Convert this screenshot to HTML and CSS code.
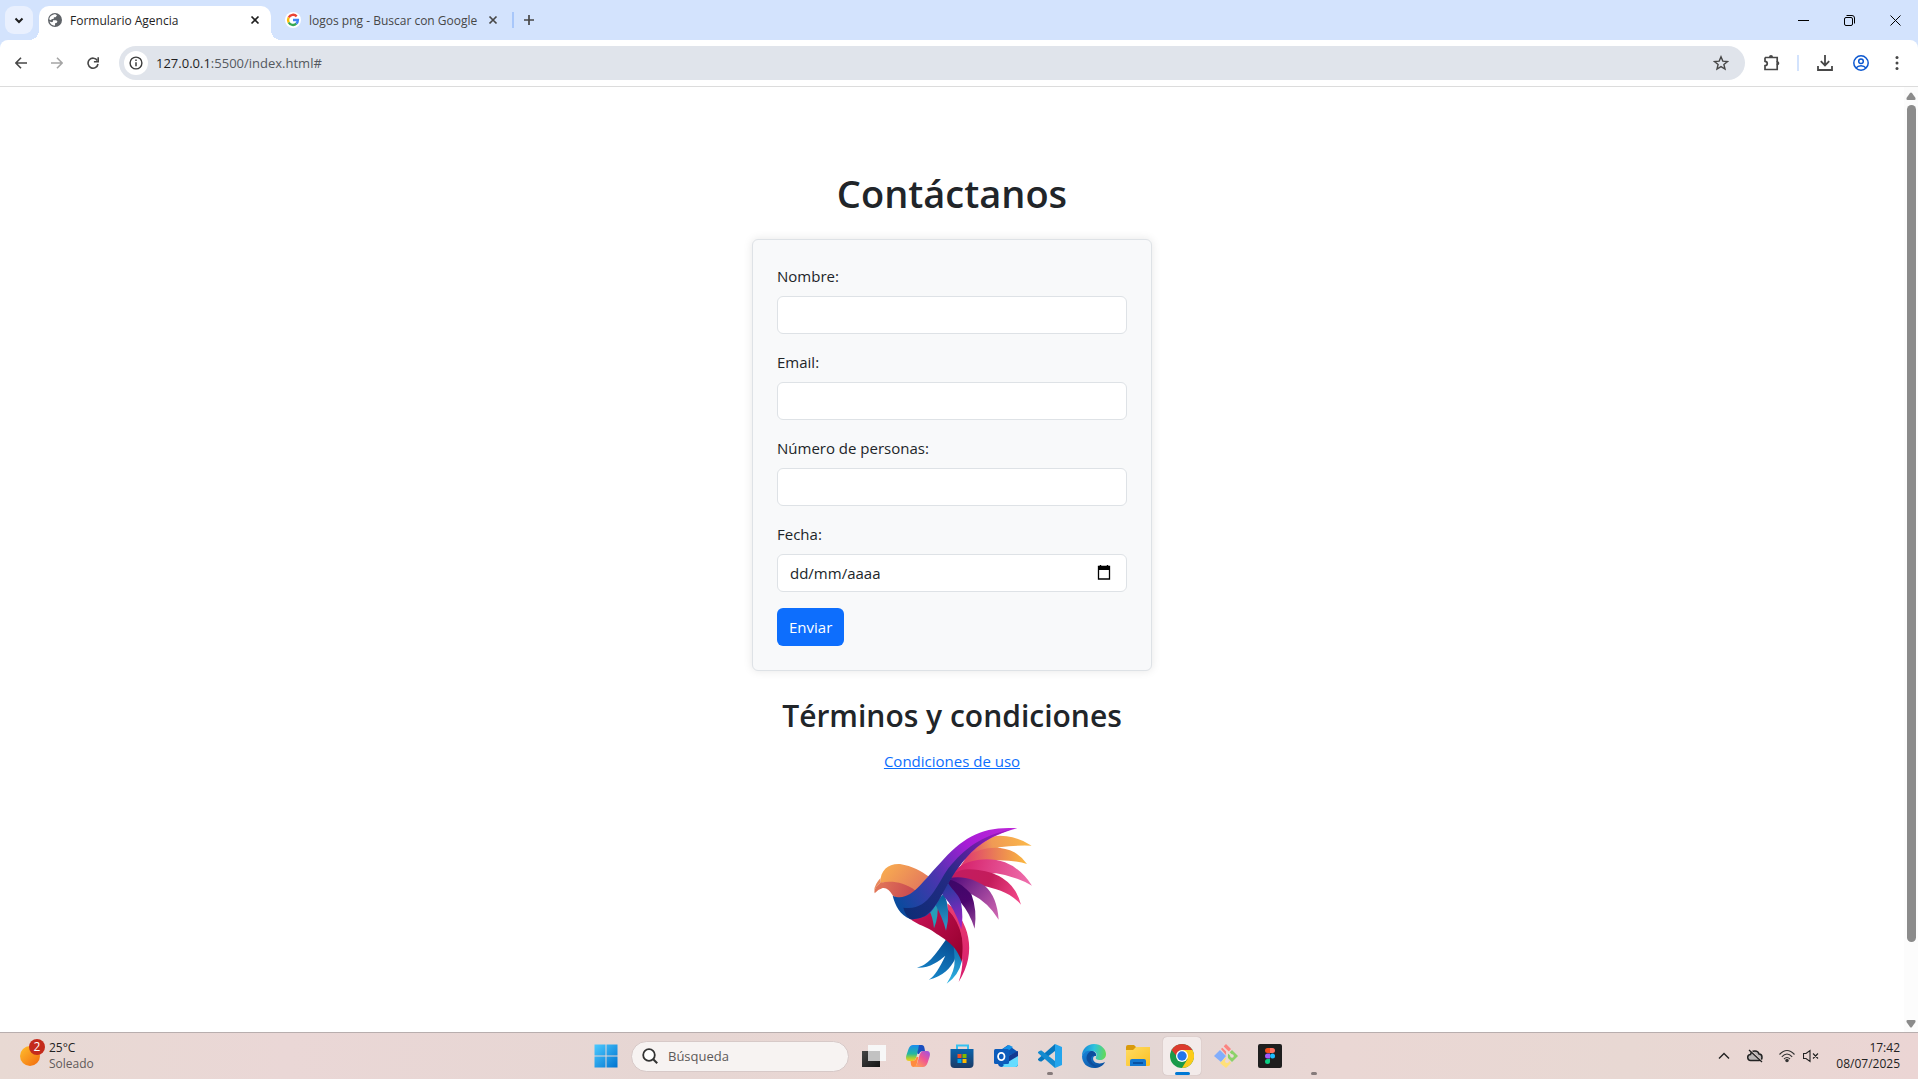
FILE: index.html
```html
<!DOCTYPE html>
<html lang="es">
<head>
<meta charset="utf-8">
<title>Formulario Agencia</title>
<meta name="viewport" content="width=device-width, initial-scale=1">
<link rel="stylesheet" href="styles.css">
</head>
<body>
<header class="browser">
  <div class="tab-strip">
    <button class="tab-search" aria-label="Buscar pestañas"><svg width="12" height="12" viewBox="0 0 12 12"><path d="M2.500 4.500 6 8l3.500-3.500" fill="none" stroke="#1f1f1f" stroke-width="2"/></svg></button>
    <div class="tab tab-active">
      <svg width="14" height="14" viewBox="0 0 14 14"><circle cx="7" cy="7" r="7" fill="#5f6368"/><path d="M7.500 1.200 9 2.600 7.500 4.200H6L5.500 6H3.800L3 7.200 1.300 6.500C1.300 3.500 4 1.200 7.500 1.200zM5 7.200h3.200l1.300 1.300-1 1.500H7.300l-.5 2.700C4.200 12.500 2 10.800 1.500 8.500L4 9.200l1-.6z" fill="#fff"/></svg>
      <span class="tab-title">Formulario Agencia</span>
      <button class="tab-close" aria-label="Cerrar"><svg width="10" height="10" viewBox="0 0 10 10"><path d="m1.500 1.500 7 7m0-7-7 7" stroke="#1f1f1f" stroke-width="1.700"/></svg></button>
    </div>
    <div class="tab tab-google">
      <svg class="google" width="16" height="16" viewBox="0 0 16 16"><circle cx="8" cy="8" r="8" fill="#fff"/><g fill="none" stroke-width="2.400"><path d="M11.700 4.300A5 5 0 0 0 3.700 5.500" stroke="#ea4335"/><path d="M3.700 5.500a5 5 0 0 0 0 5" stroke="#fbbc04"/><path d="M3.700 10.500a5 5 0 0 0 7.600 1.200" stroke="#34a853"/><path d="M11.300 11.700A5 5 0 0 0 12.900 8H8" stroke="#4285f4"/></g></svg>
      <span class="tab-title">logos png - Buscar con Google</span>
      <button class="tab-close" aria-label="Cerrar"><svg width="10" height="10" viewBox="0 0 10 10"><path d="m1.500 1.500 7 7m0-7-7 7" stroke="#474747" stroke-width="1.700"/></svg></button>
    </div>
    <span class="tab-divider"></span>
    <button class="new-tab" aria-label="Nueva pestaña"><svg width="12" height="12" viewBox="0 0 12 12"><path d="M6 1v10M1 6h10" stroke="#474747" stroke-width="1.700"/></svg></button>
    <div class="window-controls">
      <button aria-label="Minimizar"><svg width="11" height="11" viewBox="0 0 11 11"><path d="M0 5.500h11" stroke="#000"/></svg></button>
      <button aria-label="Restaurar"><svg width="11" height="11" viewBox="0 0 11 11"><rect x=".5" y="2.500" width="8" height="8" rx="1.500" fill="none" stroke="#000"/><path d="M2.500.5H8A2.500 2.500 0 0 1 10.500 3v5.500" fill="none" stroke="#000"/></svg></button>
      <button aria-label="Cerrar ventana"><svg width="11" height="11" viewBox="0 0 11 11"><path d="m.5.5 10 10m0-10-10 10" stroke="#000"/></svg></button>
    </div>
  </div>
  <div class="toolbar">
    <button aria-label="Atrás"><svg width="12" height="12" viewBox="0 0 12 12"><path d="M12 6H1.500M6 .8.900 6 6 11.200" fill="none" stroke="#474747" stroke-width="1.600"/></svg></button>
    <button aria-label="Adelante"><svg width="12" height="12" viewBox="0 0 12 12"><path d="M0 6h10.500M6 .8 11.100 6 6 11.200" fill="none" stroke="#a5a5a5" stroke-width="1.600"/></svg></button>
    <button aria-label="Recargar"><svg width="12" height="12" viewBox="0 0 12 12"><path d="M10.300 3.500A5 5 0 1 0 11 7" fill="none" stroke="#474747" stroke-width="1.600"/><path d="M11.200.3v4.400H6.900" fill="none" stroke="#474747" stroke-width="1.600"/></svg></button>
    <div class="address">
      <span class="site-info"><svg width="14" height="14" viewBox="0 0 14 14"><circle cx="7" cy="7" r="5.900" fill="none" stroke="#3c3c3c" stroke-width="1.400"/><path d="M7 6.300v4M7 3.500v1.600" stroke="#3c3c3c" stroke-width="1.500"/></svg></span>
      <p class="url"><b>127.0.0.1</b>:5500/index.html#</p>
      <button aria-label="Marcador"><svg width="16" height="16" viewBox="0 0 16 16"><path d="m8 1.800 1.800 4.300 4.700.4-3.600 3 1.100 4.600L8 11.600l-4 2.500 1.100-4.600-3.600-3 4.700-.4z" fill="none" stroke="#474747" stroke-width="1.400"/></svg></button>
    </div>
    <div class="toolbar-actions">
      <button aria-label="Extensiones"><svg width="18" height="18" viewBox="0 0 18 18"><path d="M2 3.500h12.200v4.300M14.200 10.500v5H2v-3.800c3-.2 3-4.200 0-4.400V3.500" fill="none" stroke="#474747" stroke-width="1.700"/><path d="M6 3a2 2 0 0 1 4 0zm8.300 4.200a2 2 0 0 1 0 4z" fill="#474747"/><path d="M14.200 7v4" stroke="#474747" stroke-width="1.700"/></svg></button>
      <span class="tool-divider"></span>
      <button aria-label="Descargas"><svg width="16" height="16" viewBox="0 0 16 16"><path d="M8 0v10M3.800 6.200 8 10.400l4.200-4.200M1 11v4h14v-4" fill="none" stroke="#474747" stroke-width="1.800"/></svg></button>
      <button aria-label="Perfil"><svg width="16" height="16" viewBox="0 0 16 16" fill="none" stroke="#0b57d0" stroke-width="1.500"><circle cx="8" cy="8" r="7.200"/><circle cx="8" cy="6.300" r="2.300"/><path d="M3 13c2.500-3 7.500-3 10 0"/></svg></button>
      <button aria-label="Menú"><svg width="16" height="16" viewBox="0 0 16 16" fill="#474747"><circle cx="8" cy="2.500" r="1.500"/><circle cx="8" cy="8" r="1.500"/><circle cx="8" cy="13.500" r="1.500"/></svg></button>
    </div>
  </div>
</header>
<div class="viewport">
  <main class="page">
    <h1>Contáctanos</h1>
    <form class="card">
      <div class="field"><label for="nombre">Nombre:</label><input id="nombre" type="text"></div>
      <div class="field"><label for="email">Email:</label><input id="email" type="email"></div>
      <div class="field"><label for="personas">Número de personas:</label><input id="personas" type="text" inputmode="numeric"></div>
      <div class="field"><label for="fecha">Fecha:</label>
        <div class="date"><input id="fecha" type="text" placeholder="dd/mm/aaaa"><button type="button" aria-label="Abrir calendario"><svg width="14" height="15" viewBox="0 0 14 15"><path d="M3.500 0v2M10.500 0v2" stroke="#000" stroke-width="1.400"/><path d="M1.500 1.500h11V14h-11z" fill="none" stroke="#000" stroke-width="1.300"/><path d="M1 1.500h12V5H1z"/></svg></button></div>
      </div>
      <button class="submit" type="submit">Enviar</button>
    </form>
    <h2>Términos y condiciones</h2>
    <a class="terms" href="#">Condiciones de uso</a>
    <svg class="logo" viewBox="6 -3 600 570" role="img" aria-label="Logo">
      <defs>
        <linearGradient id="wing" x1="130" y1="280" x2="500" y2="55" gradientUnits="userSpaceOnUse"><stop offset="0" stop-color="#064c9c"/><stop offset=".35" stop-color="#4a35ae"/><stop offset=".65" stop-color="#a81cd6"/><stop offset="1" stop-color="#be28d8"/></linearGradient>
        <linearGradient id="under" x1="150" y1="310" x2="440" y2="70" gradientUnits="userSpaceOnUse"><stop offset="0" stop-color="#0c2d75"/><stop offset=".5" stop-color="#252a84"/><stop offset="1" stop-color="#9419b8"/></linearGradient>
        <linearGradient id="head" x1="110" y1="160" x2="200" y2="240" gradientUnits="userSpaceOnUse"><stop offset="0" stop-color="#f8ac50"/><stop offset="1" stop-color="#e57c5c"/></linearGradient>
        <linearGradient id="cheek" x1="80" y1="220" x2="190" y2="260" gradientUnits="userSpaceOnUse"><stop offset="0" stop-color="#e27758"/><stop offset="1" stop-color="#c94850"/></linearGradient>
        <linearGradient id="f1" x1="350" y1="140" x2="530" y2="90" gradientUnits="userSpaceOnUse"><stop offset="0" stop-color="#dc3d70"/><stop offset=".45" stop-color="#f09a55"/><stop offset="1" stop-color="#fab64a"/></linearGradient>
        <linearGradient id="f2" x1="350" y1="150" x2="530" y2="150" gradientUnits="userSpaceOnUse"><stop offset="0" stop-color="#e0406e"/><stop offset=".5" stop-color="#ea8055"/><stop offset="1" stop-color="#fbb93f"/></linearGradient>
        <linearGradient id="f3" x1="320" y1="170" x2="545" y2="220" gradientUnits="userSpaceOnUse"><stop offset="0" stop-color="#d41e68"/><stop offset="1" stop-color="#ef70ae"/></linearGradient>
        <linearGradient id="f4" x1="310" y1="190" x2="510" y2="280" gradientUnits="userSpaceOnUse"><stop offset="0" stop-color="#c21c60"/><stop offset=".5" stop-color="#c41c5b"/><stop offset="1" stop-color="#f54b8b"/></linearGradient>
        <linearGradient id="f5" x1="310" y1="210" x2="445" y2="325" gradientUnits="userSpaceOnUse"><stop offset="0" stop-color="#58107e"/><stop offset="1" stop-color="#d168b2"/></linearGradient>
        <linearGradient id="f6" x1="300" y1="210" x2="375" y2="350" gradientUnits="userSpaceOnUse"><stop offset="0" stop-color="#3c0768"/><stop offset=".5" stop-color="#4b056d"/><stop offset="1" stop-color="#93449a"/></linearGradient>
        <linearGradient id="f7" x1="280" y1="230" x2="335" y2="355" gradientUnits="userSpaceOnUse"><stop offset="0" stop-color="#263ba0"/><stop offset="1" stop-color="#a422c8"/></linearGradient>
        <linearGradient id="f8" x1="270" y1="260" x2="285" y2="355" gradientUnits="userSpaceOnUse"><stop offset="0" stop-color="#0860a0"/><stop offset="1" stop-color="#3197c5"/></linearGradient>
        <linearGradient id="belly" x1="190" y1="310" x2="340" y2="430" gradientUnits="userSpaceOnUse"><stop offset="0" stop-color="#c61254"/><stop offset="1" stop-color="#96002f"/></linearGradient>
        <linearGradient id="back" x1="300" y1="300" x2="350" y2="510" gradientUnits="userSpaceOnUse"><stop offset="0" stop-color="#e83b70"/><stop offset="1" stop-color="#d81c6d"/></linearGradient>
        <linearGradient id="tail" x1="300" y1="390" x2="240" y2="510" gradientUnits="userSpaceOnUse"><stop offset="0" stop-color="#064b91"/><stop offset="1" stop-color="#1687cb"/></linearGradient>
        <linearGradient id="tail2" x1="320" y1="420" x2="292" y2="520" gradientUnits="userSpaceOnUse"><stop offset="0" stop-color="#1375b5"/><stop offset="1" stop-color="#31b6e5"/></linearGradient>
      </defs>
      <path d="M332 145C370 95 420 70 470 79Q510 84 545 107Q500 105 448 112L350 150z" fill="url(#f1)"/>
      <path d="M350 140C395 108 455 106 493 127Q515 140 531 162Q490 149 430 151L330 170z" fill="url(#f2)"/>
      <path d="M310 185C345 148 415 139 465 157Q513 176 546 227Q500 199 438 190L310 200z" fill="url(#f3)"/>
      <path d="M303 198C325 178 350 175 385 180Q490 194 513 284C480 246 435 235 400 228L303 206z" fill="url(#f4)"/>
      <path d="M295 205C340 195 375 210 405 228Q441 260 446 329Q414 277 365 253L300 215z" fill="url(#f5)"/>
      <path d="M293 208C330 215 345 235 364 252Q382 300 374 356Q359 309 334 280L293 222z" fill="url(#f6)"/>
      <path d="M292 383C250 442 235 463 201 473C238 475 266 454 286 437C268 474 255 498 236 509C280 500 302 472 314 450L322 405z" fill="url(#tail)"/>
      <path d="M310 395C330 405 343 425 335 455Q326 496 290 521Q315 483 314 450z" fill="url(#tail2)"/>
      <path d="M292 280C355 330 385 425 326 516Q350 440 322 405L290 385z" fill="url(#back)"/>
      <path d="M185 328C220 320 275 270 295 300C335 345 347 405 335 455C320 405 282 386 255 368C230 350 204 345 180 327z" fill="url(#belly)"/>
      <path d="M295 300C330 335 345 380 335 455C360 390 345 310 295 285z" fill="url(#back)"/>
      <path d="M237 300 262 275Q267 318 252 355Q249 322 237 300z" fill="#269eb8"/>
      <path d="M254 280 282 250Q304 302 288 362Q278 323 254 280z" fill="url(#f8)"/>
      <path d="M276 247 294 219C310 245 330 255 334 283Q340 320 334 358Q315 295 276 252z" fill="url(#f7)"/>
      <path d="M91 217C91 180 115 160 150 162C187 168 215 184 235 199Q219 222 194 248C165 225 120 210 91 220z" fill="url(#head)"/>
      <path d="M91 218C122 212 160 214 197 242C184 268 150 272 129 257Q114 231 98 234Q82 239 74 250Q69 235 91 218z" fill="url(#cheek)"/>
      <path d="M91 205 92 218Q81 223 73 242Q73 224 91 205z" fill="#e98a5c"/>
      <path d="M128 257C180 282 222 208 270 160C340 80 400 48 502 55C410 80 370 115 330 165C285 221 260 305 225 319Q203 330 180 327C150 315 135 285 128 257z" fill="url(#wing)"/>
      <path d="M160 293C235 305 257 230 295 175C345 115 390 78 488 57C410 82 375 110 335 160C285 222 267 292 225 318Q202 330 180 327Q165 315 160 293z" fill="url(#under)"/>
    </svg>
  </main>
  <div class="scrollbar" aria-hidden="true">
    <svg width="10" height="8" viewBox="0 0 10 8"><path d="M4 1q1-1 2 0l3.500 5q.5 2-1 2h-7q-1.500 0-1-2z" fill="#8b8b8b"/></svg>
    <div class="track"><div class="thumb"></div></div>
    <svg width="10" height="8" viewBox="0 0 10 8"><path d="M4 7q1 1 2 0l3.500-5q.5-2-1-2h-7Q0 0 .5 2z" fill="#8b8b8b"/></svg>
  </div>
</div>
<footer class="taskbar">
  <div class="weather">
    <div class="sun"><svg width="20" height="20" viewBox="0 0 20 20"><defs><linearGradient id="sun" x1="0" y1="0" x2="1" y2="1"><stop offset="0" stop-color="#ffc02e"/><stop offset="1" stop-color="#f2690d"/></linearGradient></defs><circle cx="10" cy="10" r="10" fill="url(#sun)"/></svg><span class="badge">2</span></div>
    <p class="weather-text">25°C<br><span>Soleado</span></p>
  </div>
  <div class="apps">
    <button class="app" aria-label="Inicio"><svg width="24" height="24" viewBox="0 0 24 24"><defs><linearGradient id="win" x1="0" y1="0" x2="1" y2="1"><stop offset="0" stop-color="#4ccaff"/><stop offset="1" stop-color="#0073d0"/></linearGradient></defs><path d="M.5.500h11v11H.5zM12.500.500h11v11h-11zM.5 12.500h11v11H.5zM12.500 12.500h11v11h-11z" fill="url(#win)"/></svg></button>
    <label class="search"><svg width="16" height="16" viewBox="0 0 16 16"><circle cx="7" cy="7" r="5.800" fill="#fff" stroke="#333" stroke-width="1.800"/><path d="m11.200 11.200 4 4" stroke="#333" stroke-width="2"/></svg><input type="search" placeholder="Búsqueda" aria-label="Búsqueda"></label>
    <button class="app" aria-label="Vista de tareas"><svg width="24" height="24" viewBox="0 0 24 24"><defs><linearGradient id="tv" x1="0" y1="0" x2="1" y2="1"><stop offset="0" stop-color="#454545"/><stop offset="1" stop-color="#151515"/></linearGradient></defs><path d="M0 7h18v16H0z" fill="url(#tv)"/><path d="M6 1h18v16H6z" fill="#f7f7f7"/><path d="M6 7h12v10H6z" fill="#c2c2c2"/></svg></button>
    <button class="app" aria-label="Copilot"><svg width="24" height="24" viewBox="0 0 24 24"><defs><linearGradient id="cp1" x1="0" y1="0" x2="0" y2="1"><stop offset="0" stop-color="#1b8cf0"/><stop offset=".55" stop-color="#23b8a0"/><stop offset=".8" stop-color="#a0cf38"/><stop offset="1" stop-color="#f5cb25"/></linearGradient><linearGradient id="cp2" x1="1" y1="0" x2=".2" y2="1"><stop offset="0" stop-color="#9a52e8"/><stop offset=".5" stop-color="#ef5594"/><stop offset="1" stop-color="#ffa052"/></linearGradient></defs><path d="M7 1h9c-3 1-3.500 5-5 10s-2.500 6-5 6H3c-3 0-3.500-3-2.500-6l2-6Q4 1 7 1z" fill="url(#cp1)"/><path d="M17 23H8c3-1 3.500-5 5-10s2.500-6 5-6h3c3 0 3.500 3 2.500 6l-2 6q-1.500 4-4.500 4z" fill="url(#cp2)"/><path d="M13 1h3c2 0 2.500 2 3 6h-2c-2 0-3 1-4 3-2 0-2-1-1-4z" fill="#1b4fc0"/><path d="M6 17c2.500 0 3.500-1 4.500-4h2c-1.500 5-1.500 10-5 10-2.500 0-2.500-3-3-6z" fill="#ff8b3e"/></svg></button>
    <button class="app" aria-label="Microsoft Store"><svg width="24" height="24" viewBox="0 0 24 24"><defs><linearGradient id="st" x1="0" y1="0" x2="0" y2="1"><stop offset="0" stop-color="#0b63ac"/><stop offset="1" stop-color="#1b3b66"/></linearGradient></defs><path d="M7 7V1.500h11V7" fill="none" stroke="#35c1f1" stroke-width="2"/><path d="M.5 5h23v15q0 4-4 4h-15q-4 0-4-4z" fill="url(#st)"/><path d="M7.500 10h4v4h-4z" fill="#f25022"/><path d="M12.500 10h4v4h-4z" fill="#7fba00"/><path d="M7.500 15h4v4h-4z" fill="#00a4ef"/><path d="M12.500 15h4v4h-4z" fill="#ffb900"/></svg></button>
    <button class="app" aria-label="Outlook"><svg width="24" height="24" viewBox="0 0 24 24"><path d="M4 8 14 1l10 7v12q0 3-3 3H8q-4 0-4-4z" fill="#0b57b5"/><path d="m5 7 10-6 4 2L8 12z" fill="#1592e8"/><path d="M8 14 24 8v12q0 3-3 3H10z" fill="#42cdf8"/><path d="m14 18 10-8v9q0 4-4 4H8z" fill="#64dcff"/><path d="M14 12 24 7v5l-10 6z" fill="#123a92"/><rect y="5" width="15" height="15" rx="1.500" fill="#0c5cbb"/><ellipse cx="7.300" cy="12.500" rx="3.200" ry="3.700" fill="none" stroke="#fff" stroke-width="1.800"/></svg></button>
    <button class="app running" aria-label="Visual Studio Code"><svg width="24" height="24" viewBox="0 0 24 24"><path d="M17 0 24 3v18l-7 3z" fill="#24a5ed"/><path d="M17 0v7L3.500 17.500Q2 18 0 16v-1z" fill="#0876bd"/><path d="M17 24v-7L3.500 6.500Q2 6 0 8v1z" fill="#148bd0"/></svg></button>
    <button class="app" aria-label="Edge"><svg width="24" height="24" viewBox="0 0 24 24"><defs><linearGradient id="ed1" x1="0" y1=".3" x2="1" y2=".4"><stop offset="0" stop-color="#1587d8"/><stop offset=".5" stop-color="#2fc3dd"/><stop offset="1" stop-color="#62d957"/></linearGradient><linearGradient id="ed2" x1="0" y1="0" x2="1" y2="1"><stop offset="0" stop-color="#1785db"/><stop offset="1" stop-color="#0a4a99"/></linearGradient></defs><path d="M0 12C0 5 5 0 12 0s12 5 12 10c0 4-3 6-6 6s-5-1-4-3c2-4-1-6-5-6-5 0-8 2-9 5z" fill="url(#ed1)"/><path d="M0 12c1-4 5-6 9-5 4 0 6 3 5 5-4-1-4 6 1 7 3 1 6 0 8-1-2 4-6 6-11 6C5 24 0 19 0 12z" fill="url(#ed2)"/><path d="M9 7c-4 2-6 7-3 11s8 6 12 4c-5 0-9-3-9-7 0-3 2-4 5-3 0-3-2-5-5-5z" fill="#0d4e9d"/></svg></button>
    <button class="app" aria-label="Explorador"><svg width="24" height="24" viewBox="0 0 24 24"><defs><linearGradient id="fd" x1="0" y1="0" x2="1" y2="1"><stop offset="0" stop-color="#ffdc62"/><stop offset="1" stop-color="#fbc024"/></linearGradient></defs><path d="M0 8V3q0-2 2-2h6l2 2h10v6z" fill="#d99a0b"/><path d="M0 6h7l3-3h14v18q0 1-2 1H1q-1 0-1-1z" fill="url(#fd)"/><path d="M4 22v-5q0-2 2-2h12q2 0 2 2v5z" fill="#1479d2"/><path d="M7 18h10v2H7z" fill="#0852a3"/></svg></button>
    <button class="app current" aria-label="Chrome"><svg width="24" height="24" viewBox="0 0 24 24"><circle cx="12" cy="12" r="12" fill="#1b9a4a"/><path d="M22.400 6A12 12 0 0 1 12 24l5.500-9L12 6z" fill="#fccb19"/><path d="M1.600 6A12 12 0 0 1 12 0a12 12 0 0 1 10.400 6H12c-3 0-5 2-5.500 6z" fill="#dc3a2d"/><circle cx="12" cy="12" r="6" fill="#fff"/><circle cx="12" cy="12" r="4.700" fill="#2375e8"/></svg></button>
    <button class="app" aria-label="Git"><svg width="24" height="24" viewBox="0 0 24 24"><path d="m12 0 5 5-5 6-5-6z" fill="#fb8480"/><path d="m6 6 6 6-5 6-7-6z" fill="#82adfb"/><path d="m18 6 6 6-6 6-6-6z" fill="#8bd269"/><path d="m12 13 5 6-5 5-6-5z" fill="#ffe078"/><path d="m8 2 5 5v10M13 7l5 5" fill="none" stroke="#ead9d7" stroke-width="1.800"/><circle cx="13" cy="17" r="2" fill="#ead9d7"/><circle cx="18" cy="12" r="1.800" fill="#ead9d7"/></svg></button>
    <button class="app" aria-label="Figma"><svg width="24" height="24" viewBox="0 0 24 24"><rect width="24" height="24" rx="2" fill="#1e1e1e"/><path d="M12 4H9.500a2.500 2.500 0 0 0 0 5H12z" fill="#f24e1e"/><path d="M12 4h2.500a2.500 2.500 0 0 1 0 5H12z" fill="#ff7262"/><path d="M12 9.500H9.500a2.500 2.500 0 0 0 0 5H12z" fill="#a259ff"/><circle cx="14.500" cy="12" r="2.500" fill="#1abcfe"/><path d="M12 15H9.500a2.500 2.500 0 1 0 2.500 2.500z" fill="#0acf83"/></svg></button>
    <button class="app running" aria-label="Aplicación"></button>
  </div>
  <div class="tray">
    <svg width="12" height="12" viewBox="0 0 12 12"><path d="m1 8.500 5-5 5 5" fill="none" stroke="#222" stroke-width="1.400"/></svg>
    <svg class="cloud" width="16" height="14" viewBox="0 0 16 14"><path d="M4 11.500a3 3 0 0 1-.5-6C4.500 1 11 1 12 5c4 0 4 6.500 0 6.500z" fill="#b9b4b4" stroke="#222" stroke-width="1.500"/><path d="m3 1 12 11" stroke="#e7d6d4" stroke-width="1.300"/><path d="m2 1 13 12" stroke="#222" stroke-width="1.300"/></svg>
    <svg class="wifi" width="16" height="14" viewBox="0 0 16 14" fill="none" stroke="#333" stroke-width="1.100"><path d="M.5 5.500q7.500-8 15 0M2.800 7.800q5.200-5.500 10.400 0M5 10q3-3 6 0"/><circle cx="8" cy="11.500" r="1.200" fill="#333"/></svg>
    <svg width="16" height="14" viewBox="0 0 16 14" fill="none" stroke="#222" stroke-width="1.100"><path d="M.5 4.500H3l4-3v11l-4-3H.500zM10 4.500l5 5M15 4.500l-5 5"/></svg>
    <p class="clock">17:42<br>08/07/2025</p>
  </div>
</footer>
</body>
</html>
```

FILE: styles.css
```css
* { box-sizing: border-box; }
body {
  margin: 0;
  min-height: 100vh;
  display: flex;
  flex-direction: column;
  background: #fff;
  color: #212529;
  font-family: "Open Sans", "Noto Sans", sans-serif;
  font-size: 15px;
}
p, h1, h2 { margin: 0; }
button {
  border: 0;
  padding: 0;
  background: none;
  font: inherit;
  display: flex;
  align-items: center;
  justify-content: center;
}
svg { display: block; flex: none; }

/* Browser frame */
.browser { background: #d3e3fd; }
.tab-strip {
  display: flex;
  align-items: center;
  height: 40px;
  padding-left: 5px;
  font-size: 12px;
}
.tab-search {
  width: 28px;
  height: 28px;
  border-radius: 9px;
  background: #e9f0fe;
  margin-right: 6px;
}
.tab {
  display: flex;
  align-items: center;
  gap: 8px;
  color: #474747;
}
.tab-active {
  align-self: flex-end;
  position: relative;
  width: 232px;
  height: 34px;
  padding: 0 10px 6px 9px;
  background: #fff;
  border-radius: 10px 10px 0 0;
  color: #1f1f1f;
}
.tab-active::before, .tab-active::after {
  content: "";
  position: absolute;
  bottom: 0;
  width: 10px;
  height: 10px;
}
.tab-active::before {
  right: 100%;
  background: radial-gradient(circle at 0 0, transparent 10px, #fff 10px);
}
.tab-active::after {
  left: 100%;
  background: radial-gradient(circle at 100% 0, transparent 10px, #fff 10px);
}
.tab-title { flex: 1; white-space: nowrap; }
.tab-google { width: 238px; padding: 0 10px 0 14px; }
.tab-close { width: 12px; height: 16px; }
.tab-divider { width: 2px; height: 16px; background: #a8c7fa; margin-left: 3px; }
.new-tab { width: 30px; height: 28px; }
.window-controls { display: flex; margin-left: auto; }
.window-controls button { width: 46px; height: 40px; }
.toolbar {
  display: flex;
  align-items: center;
  height: 47px;
  padding: 0 13px 0 3px;
  background: #fff;
  border-radius: 8px 8px 0 0;
  border-bottom: 1px solid #dcdcdc;
}
.toolbar > button { width: 36px; height: 34px; }
.address {
  flex: 1;
  display: flex;
  align-items: center;
  height: 34px;
  padding: 0 16px 0 5px;
  border-radius: 17px;
  background: #e0e4eb;
  margin-left: 8px;
}
.site-info {
  display: grid;
  place-items: center;
  width: 24px;
  height: 24px;
  border-radius: 12px;
  background: #fff;
}
.url { flex: 1; padding-left: 8px; font-size: 13px; color: #55595f; }
.url b { font-weight: 400; color: #1f1f1f; }
.toolbar-actions { display: flex; align-items: center; gap: 20px; padding-left: 18px; }
.tool-divider { width: 2px; height: 16px; background: #d3e3fd; margin: 0 -2px 0 -4px; }

/* Page */
.viewport { flex: 1; display: flex; }
.page {
  flex: 1;
  display: flex;
  flex-direction: column;
  align-items: center;
  padding: 82px 12px 0;
}
h1 { font-size: 38px; line-height: 48px; font-weight: 600; margin-bottom: 22px; }
h2 { font-size: 30px; line-height: 38px; font-weight: 600; margin: 26px 0 14px; }
.card {
  width: 100%;
  max-width: 400px;
  padding: 24px;
  border: 1px solid #dee2e6;
  border-radius: 6px;
  background: #f8f9fa;
  box-shadow: 0 0 10px rgba(0, 0, 0, .1);
}
.field { margin-bottom: 16px; }
label { display: block; line-height: 24px; margin-bottom: 8px; }
.field input {
  display: block;
  width: 100%;
  height: 38px;
  padding: 6px 12px;
  border: 1px solid #dee2e6;
  border-radius: 6px;
  background: #fff;
  font: inherit;
  color: #212529;
}
.field input::placeholder { color: #212529; opacity: 1; }
.date { position: relative; }
.date button { position: absolute; right: 16px; top: 0; height: 36px; }
.submit {
  height: 38px;
  padding: 0 12px;
  border-radius: 6px;
  background: #0d6efd;
  color: #fff;
}
.terms { line-height: 24px; color: #0d6efd; }
.logo { width: 200px; height: 190px; margin-top: 36px; }
.scrollbar {
  display: flex;
  flex-direction: column;
  align-items: center;
  gap: 5px;
  width: 14px;
  padding: 5px 0 4px;
  background: #fcfcfc;
}
.track { flex: 1; width: 9px; }
.thumb { height: 92%; border-radius: 5px; background: #8b8b8b; }

/* Taskbar */
.taskbar {
  display: grid;
  grid-template-columns: 1fr auto 1fr;
  height: 47px;
  padding-left: 2px;
  border-top: 1px solid #b8aeae;
  background: linear-gradient(90deg, #e8d9d3, #ead7d6 15%, #e6d6d3 35%, #ebd7d4 50%, #e2d6d4 57%, #ead7d4 70%, #e8d8d3 85%, #ebd5d4);
  font-size: 12px;
}
.weather { display: flex; align-items: center; gap: 9px; padding-left: 18px; }
.sun { position: relative; }
.badge {
  position: absolute;
  left: 9px;
  top: -7px;
  width: 16px;
  height: 16px;
  border-radius: 8px;
  background: #c42b1c;
  color: #fff;
  line-height: 16px;
  text-align: center;
}
.weather-text, .clock { line-height: 16px; color: #222; }
.weather-text span { color: #605a5a; }
.apps { display: flex; align-items: center; gap: 6px; }
.app { position: relative; width: 38px; height: 38px; border-radius: 4px; }
.current { background: #f3ebea; box-shadow: 0 0 1px #a99; }
.running::after, .current::after {
  content: "";
  position: absolute;
  bottom: 0;
  width: 6px;
  height: 3px;
  border-radius: 2px;
  background: #857a7a;
}
.current::after { width: 15px; background: #0078d4; }
.search {
  display: flex;
  align-items: center;
  gap: 10px;
  width: 218px;
  height: 31px;
  margin: 0;
  padding: 0 10px;
  border: 1px solid #d7c9c8;
  border-radius: 16px;
  background: #f7f3f2;
}
.search input {
  flex: 1;
  min-width: 0;
  padding: 0;
  border: 0;
  outline: 0;
  background: none;
  font: inherit;
  font-size: 13px;
}
.search input::placeholder { color: #5c5959; opacity: 1; }
.tray { display: flex; align-items: center; justify-content: flex-end; padding-right: 18px; }
.cloud { margin-left: 17px; }
.wifi { margin: 0 8px 0 16px; }
.clock { text-align: right; margin-left: 17px; }
```
